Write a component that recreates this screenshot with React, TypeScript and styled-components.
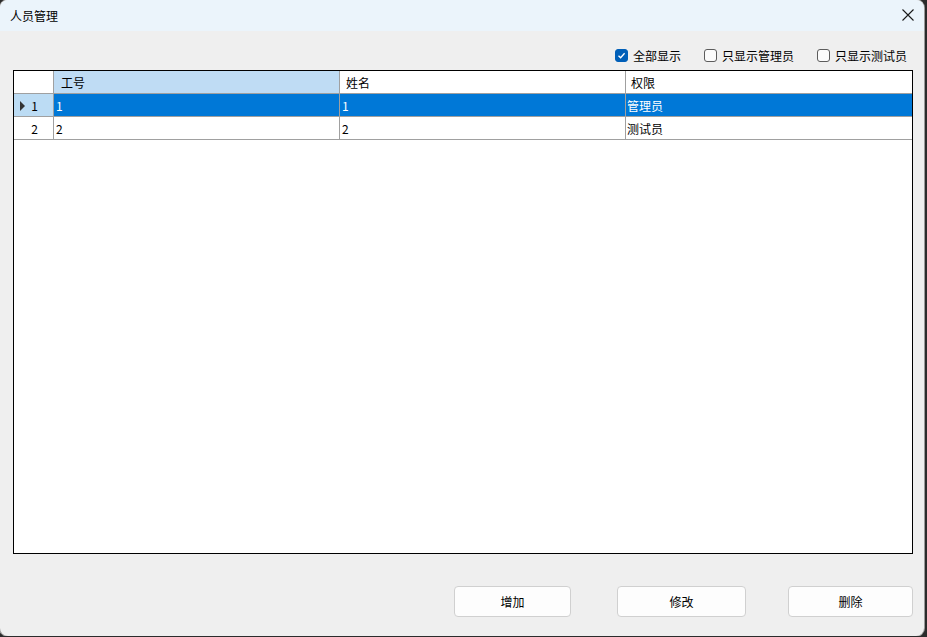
import { type ReactNode } from 'react';
import styled, { createGlobalStyle } from 'styled-components';

const Global = createGlobalStyle`
  html, body {
    margin: 0;
    padding: 0;
    background: #2b2b2b;
  }
  * { box-sizing: border-box; }
`;

const Window = styled.div`
  width: 924px;
  height: 636px;
  display: flex;
  flex-direction: column;
  background: #efefef;
  border-radius: 8px;
  overflow: hidden;
  box-shadow: 0 0 0 1px #9a9a9a;
  font-family: "Noto Sans CJK SC", "Liberation Sans", sans-serif;
  color: #000;
`;

const TitleBar = styled.div`
  height: 31px;
  flex: none;
  display: flex;
  align-items: center;
  justify-content: space-between;
  padding: 0 10px 1px 10px;
  background: #ebf4fb;
  font-size: 12px;
`;

const CloseBtn = styled.div`
  width: 14px;
  height: 14px;
  display: flex;
  align-items: center;
  justify-content: center;
  margin-right: -1px;
`;

const FilterRow = styled.div`
  height: 39px;
  flex: none;
  display: flex;
  align-items: center;
  justify-content: flex-end;
  gap: 23px;
  padding: 10px 17px 0 0;
  font-size: 12px;
`;

const CheckLabel = styled.label`
  display: flex;
  align-items: center;
  gap: 5px;
`;

const Box = styled.span<{ $checked?: boolean }>`
  width: 13px;
  height: 13px;
  border-radius: 3px;
  display: flex;
  align-items: center;
  justify-content: center;
  background: ${(p) => (p.$checked ? '#005fb8' : '#fbfbfb')};
  border: 1px solid ${(p) => (p.$checked ? '#005fb8' : '#5c5c5c')};
`;

const Grid = styled.div`
  flex: none;
  height: 484px;
  margin: 0 11px 0 13px;
  border: 1px solid #000;
  background: #fff;
  display: grid;
  grid-template-columns: 40px 286px 286px 1fr;
  grid-auto-rows: 23px;
  align-content: start;
  font-size: 12px;
`;

const Cell = styled.div<{ $bg?: string; $color?: string; $pad?: number; $center?: boolean; $last?: boolean }>`
  display: flex;
  align-items: center;
  justify-content: ${(p) => (p.$center ? 'center' : 'flex-start')};
  padding-left: ${(p) => p.$pad ?? 2}px;
  background: ${(p) => p.$bg ?? '#fff'};
  color: ${(p) => p.$color ?? '#000'};
  border-right: ${(p) => (p.$last ? 'none' : '1px solid #a0a0a0')};
  border-bottom: 1px solid #a0a0a0;
  white-space: nowrap;
  overflow: hidden;
  position: relative;
`;

const Arrow = styled.span`
  position: absolute;
  left: 6px;
  top: 7px;
  width: 0;
  height: 0;
  border-top: 5px solid transparent;
  border-bottom: 5px solid transparent;
  border-left: 5px solid #333;
`;

const ButtonRow = styled.div`
  flex: 1;
  display: flex;
  align-items: center;
  justify-content: flex-end;
  padding: 14px 11px 1px 0;
`;

const Button = styled.button<{ $w: number; $ml?: number }>`
  width: ${(p) => p.$w}px;
  height: 31px;
  margin-left: ${(p) => p.$ml ?? 0}px;
  background: #fdfdfd;
  border: 1px solid #d0d0d0;
  border-radius: 4px;
  font-family: inherit;
  font-size: 12px;
  color: #000;
`;

const Check = ({ checked, children }: { checked?: boolean; children: ReactNode }) => (
  <CheckLabel>
    <Box $checked={checked}>
      {checked && (
        <svg width="9" height="9" viewBox="0 0 9 9">
          <path d="M1.5 4.8 L3.6 6.8 L7.6 2.2" stroke="#fff" strokeWidth="1.3" fill="none" />
        </svg>
      )}
    </Box>
    {children}
  </CheckLabel>
);

const rows = [
  { id: '1', name: '1', role: '管理员', selected: true },
  { id: '2', name: '2', role: '测试员', selected: false },
];

export default function App() {
  return (
    <Window>
      <Global />
      <TitleBar>
        <span>人员管理</span>
        <CloseBtn>
          <svg width="12" height="12" viewBox="0 0 12 12">
            <path d="M0.5 0.5 L11.5 11.5 M11.5 0.5 L0.5 11.5" stroke="#1a1a1a" strokeWidth="1.1" />
          </svg>
        </CloseBtn>
      </TitleBar>
      <FilterRow>
        <Check checked>全部显示</Check>
        <Check>只显示管理员</Check>
        <Check>只显示测试员</Check>
      </FilterRow>
      <Grid>
        <Cell />
        <Cell $bg="#bfdcf4" $pad={7}>工号</Cell>
        <Cell $pad={6}>姓名</Cell>
        <Cell $pad={5} $last>权限</Cell>
        {rows.map((r) => {
          const bg = r.selected ? '#0078d7' : '#fff';
          const color = r.selected ? '#fff' : '#000';
          return [
            <Cell key={r.id + 'h'} $bg={r.selected ? '#bcdcf4' : '#fff'} $pad={0} $center>
              {r.selected && <Arrow />}
              <span style={{ marginLeft: 2 }}>{r.id}</span>
            </Cell>,
            <Cell key={r.id + 'a'} $bg={bg} $color={color}>{r.id}</Cell>,
            <Cell key={r.id + 'b'} $bg={bg} $color={color}>{r.name}</Cell>,
            <Cell key={r.id + 'c'} $bg={bg} $color={color} $pad={1} $last>{r.role}</Cell>,
          ];
        })}
      </Grid>
      <ButtonRow>
        <Button $w={117}>增加</Button>
        <Button $w={129} $ml={46}>修改</Button>
        <Button $w={125} $ml={42}>删除</Button>
      </ButtonRow>
    </Window>
  );
}
